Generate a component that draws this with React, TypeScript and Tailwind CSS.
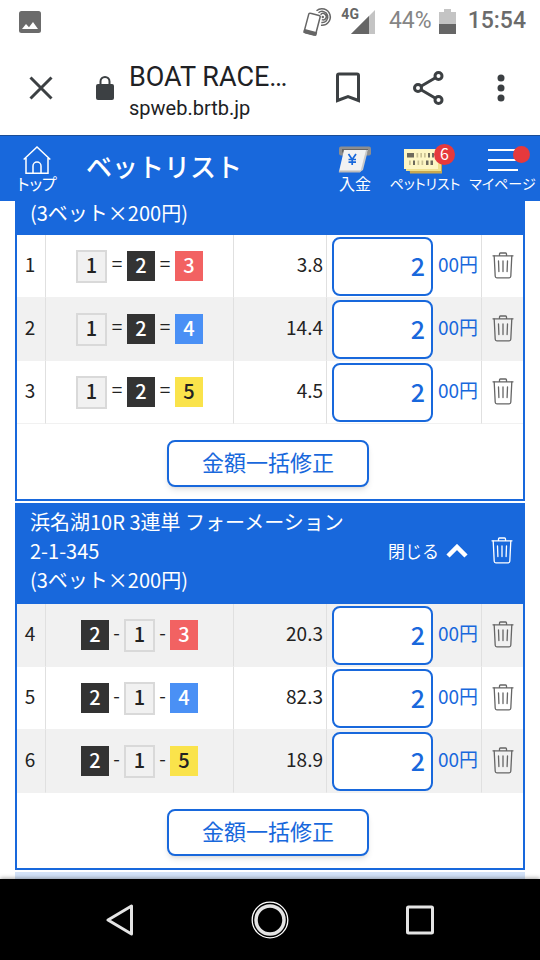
import { useState } from 'react';
import clsx from 'clsx';

type Bet = { no: number; boats: number[]; odds: string };

const quinellaBets: Bet[] = [
  { no: 1, boats: [1, 2, 3], odds: '3.8' },
  { no: 2, boats: [1, 2, 4], odds: '14.4' },
  { no: 3, boats: [1, 2, 5], odds: '4.5' },
];

const formationBets: Bet[] = [
  { no: 4, boats: [2, 1, 3], odds: '20.3' },
  { no: 5, boats: [2, 1, 4], odds: '82.3' },
  { no: 6, boats: [2, 1, 5], odds: '18.9' },
];

const boatStyles: Record<number, string> = {
  1: 'h-[33px] w-[31px] border-2 border-[#d9d9d9] bg-[#f1f1f1] text-[#222]',
  2: 'h-[30px] w-7 bg-[#333] text-white',
  3: 'h-[30px] w-7 bg-[#f26262] text-white',
  4: 'h-[30px] w-7 bg-[#4a90f5] text-white',
  5: 'h-[30px] w-7 bg-[#fae34b] text-[#222]',
};

function TrashIcon() {
  return (
    <svg width="22" height="27" viewBox="0 0 22 27" fill="none" stroke="currentColor" strokeWidth="1.3" strokeLinecap="round" strokeLinejoin="round">
      <path d="M1 3.8h20M7.5 3.5V1.9q0-.9.9-.9h5.2q.9 0 .9.9v1.6" />
      <path d="M2.2 4l1 20.3q.1 1.500 1.600 1.500h12.400q1.500 0 1.600-1.500l1-20.300" />
      <path d="M6.500 9l.4 10.500M11 9v10.500M15.500 9l-.4 10.500" />
    </svg>
  );
}

function StatusBar() {
  return (
    <div className="flex h-[43px] shrink-0 items-center justify-between pr-[14px] pl-[19px] font-[Roboto,sans-serif]">
      <svg width="22" height="22" viewBox="0 0 22 22">
        <rect width="22" height="22" rx="2.500" fill="#6b6b6b" />
        <path d="M3 18l4-5 3 3.200 4-5.200 5 7z" fill="#fff" />
      </svg>
      <div className="flex items-center">
        <svg width="30" height="30" viewBox="0 0 30 30" fill="none" stroke="#666" strokeWidth="1.500">
          <path d="M13.500 3.800a8.300 8.300 0 1 1 4.500 14.500M15.500 5.800a5.600 5.600 0 1 1 2.800 9.700M17.600 7.700a3.200 3.200 0 1 1 1.200 4.900" />
          <circle cx="19.800" cy="10" r="1.200" fill="#666" stroke="none" />
          <path d="M7.500 6.300l8.600 2.200q1.400.4 1 1.800l-4.300 16.500q-.4 1.500-1.800 1.100L2.300 25.700Q.9 25.300 1.300 23.900L5.700 7.400q.4-1.500 1.800-1.100z" fill="#fff" />
          <path d="M1.700 22.800l11.600 3-.7 2.300-11.400-3z" fill="#666" />
        </svg>
        <span className="ml-2 self-start text-[14px] leading-5 font-bold text-[#666]">4G</span>
        <svg className="-ml-2" width="24" height="24" viewBox="0 0 24 24">
          <path d="M24 0v24H0z" fill="#c4c4c4" />
          <path d="M18 6v18H0z" fill="#666" />
        </svg>
        <span className="ml-[14px] text-[23px] text-[#858585]">44%</span>
        <svg className="ml-[7px]" width="17" height="25" viewBox="0 0 17 25">
          <path d="M5 0h7v3h5v22H0V3h5z" fill="#c4c4c4" />
          <path d="M0 15h17v10H0z" fill="#666" />
        </svg>
        <span className="ml-3 text-[23px] font-medium text-[#6b6b6b]">15:54</span>
      </div>
    </div>
  );
}

function BrowserBar() {
  return (
    <div className="flex h-[92px] shrink-0 items-center pr-[35px] pb-[2px] pl-[29px] font-[Roboto,sans-serif] text-[#3c4043]">
      <button aria-label="閉じる">
        <svg width="24" height="24" viewBox="0 0 24 24" fill="none" stroke="currentColor" strokeWidth="3">
          <path d="M1.500 1.500l21 21M22.500 1.500l-21 21" />
        </svg>
      </button>
      <svg className="ml-[42px]" width="20" height="24" viewBox="0 0 20 24">
        <rect x="1" y="8" width="18" height="16" rx="2" fill="currentColor" />
        <path d="M5.500 9V5.500a4.500 4.500 0 0 1 9 0V9" fill="none" stroke="currentColor" strokeWidth="2" />
      </svg>
      <div className="ml-[14px] min-w-0 flex-1 pt-2 text-[#202124]">
        <p className="truncate text-[27px] leading-[32px]">BOAT RACE…</p>
        <p className="text-[20px] leading-[30px]">spweb.brtb.jp</p>
      </div>
      <button aria-label="ブックマーク">
        <svg width="24" height="32" viewBox="0 0 24 32" fill="none" stroke="currentColor" strokeWidth="3">
          <path d="M1.500 28.500v-25q0-1.500 1.500-1.500h18q1.500 0 1.500 1.500v25L12 24.500z" />
        </svg>
      </button>
      <button aria-label="共有" className="ml-[53px]">
        <svg width="31" height="34" viewBox="0 0 31 34" fill="none" stroke="currentColor" strokeWidth="3">
          <circle cx="5" cy="17" r="3.500" />
          <circle cx="25.500" cy="5" r="3.500" />
          <circle cx="25.500" cy="29" r="3.500" />
          <path d="M8 15.200L22.500 6.800M8 18.800l14.500 8.400" />
        </svg>
      </button>
      <button aria-label="メニュー" className="ml-[53px]">
        <svg width="8" height="28" viewBox="0 0 8 28" fill="currentColor">
          <circle cx="4" cy="4" r="3.500" />
          <circle cx="4" cy="14" r="3.500" />
          <circle cx="4" cy="24" r="3.500" />
        </svg>
      </button>
    </div>
  );
}

function SiteHeader() {
  const item = 'flex flex-col items-center leading-4 whitespace-nowrap [font-feature-settings:"palt"]';
  return (
    <header className="relative z-10 flex h-[66px] shrink-0 border-t border-[#1b4d96] bg-[#1868dc] pt-[10px] text-white">
      <a href="#top" className={clsx(item, 'w-[74px] text-[16px]')}>
        <svg className="mb-px" width="28" height="28" viewBox="0 0 28 28" fill="none" stroke="currentColor" strokeWidth="1.500">
          <path d="M.7 13.500L14 1l13.300 12.500M3 12v15.200h22V12" />
          <path d="M10 27v-7a4 4 0 0 1 8 0v7" />
        </svg>
        トップ
      </a>
      <h1 className="flex-1 pl-3 text-[26px] leading-[40px] font-medium whitespace-nowrap">ベットリスト</h1>
      <nav className="flex">
        <a href="#deposit" className={clsx(item, 'w-[60px] text-[16px]')}>
          <svg className="mb-px" width="34" height="28" viewBox="0 0 34 28">
            <rect x="1" y=".5" width="32" height="9" rx="2" fill="#8e8e8e" />
            <rect x="4" y="3" width="26" height="3.500" fill="#666" />
            <path d="M26 4h4l-5 20-3 2z" fill="#c9c9c9" />
            <path d="M6 4h22l-5.500 21.500H1z" fill="#f2f2f2" />
            <path d="M1 24.500h22l-1 2H.8z" fill="#bcbcbc" />
            <path d="M10.500 8l3.700 5.500L18 8M14.200 13.500V19M10.500 13.500h7.500M10.500 16.200h7.500" fill="none" stroke="#1868dc" strokeWidth="1.700" />
          </svg>
          入金
        </a>
        <a href="#bets" className={clsx(item, 'relative w-[80px] text-[14px]')}>
          <svg className="mr-1 mb-px" width="42" height="28" viewBox="0 0 42 28">
            <path d="M6 7h34v20.500H8z" fill="#c9a94e" />
            <path d="M4 5h35v20H4z" fill="#efe08f" />
            <path d="M2 3h34v20H2z" fill="#fdf6c4" />
            <path d="M5 7h7v4.500H5zM26 7h2v4.500h-2zM30 7h2v4.500h-2zM11 14.500h2V19h-2zM24 14.500h2.500V19H24zM28.500 14.500H31V19h-2.500z" fill="#6d6a5c" />
            <path d="M14.500 7h1.700v4.500h-1.700zM18.300 7H20v4.500h-1.700zM22 7h1.700v4.500H22zM7 14.500h1.700V19H7zM15.500 14.500h1.700V19h-1.700zM19.500 14.500h1.700V19h-1.700z" fill="#c9c193" />
          </svg>
          ペットリスト
          <span className="absolute -top-0.5 right-[10px] flex size-[21px] items-center justify-center rounded-full bg-[#e6393c] pb-[3px] text-[16px]">6</span>
        </a>
        <a href="#mypage" className={clsx(item, 'relative w-[75px] text-[14px]')}>
          <svg className="mb-px" width="30" height="28" viewBox="0 0 30 28" stroke="currentColor" strokeWidth="2">
            <path d="M0 4h30M0 14h30M0 24h30" />
          </svg>
          マイページ
          <span className="absolute top-0 right-[10px] size-[17px] rounded-full bg-[#e6393c]" />
        </a>
      </nav>
    </header>
  );
}

function BetTable({ bets, separator, grayFirst }: { bets: Bet[]; separator: '=' | '-'; grayFirst?: boolean }) {
  const [amounts, setAmounts] = useState<string[]>(bets.map(() => '2'));

  return (
    <table className="w-full table-fixed border-separate border-spacing-0 text-[19px] text-[#222]">
      <colgroup>
        <col className="w-[29px]" />
        <col />
        <col className="w-[93px]" />
        <col className="w-[155px]" />
        <col className="w-[41px]" />
      </colgroup>
      <tbody>
        {bets.map((bet, i) => (
          <tr key={bet.no} className={clsx('h-[63px] *:border-b *:border-[#f1f1f1] *:p-0', (i % 2 === 0) === !!grayFirst ? 'bg-[#f1f1f1]' : 'bg-white')}>
            <td className="border-r !border-r-[#e0e0e0] !pr-[2px] !pb-[3px] text-center">{bet.no}</td>
            <td className="border-r !border-r-[#e0e0e0]">
              <div className="flex items-center justify-center">
                {bet.boats.map((boat, n) => (
                  <div key={boat} className="flex items-center">
                    {n > 0 && <span className={clsx('pb-[5px] text-center', separator === '=' ? 'w-5' : 'w-[15px]')}>{separator}</span>}
                    <span className={clsx('flex items-center justify-center pb-[3px] text-[20px] font-medium', boatStyles[boat])}>{boat}</span>
                  </div>
                ))}
              </div>
            </td>
            <td className="border-r !border-r-[#e0e0e0] !pr-[3px] !pb-[3px] text-right">{bet.odds}</td>
            <td className="border-r !border-r-[#e0e0e0]">
              <label className="flex items-center pl-[5px] text-[#1868dc]">
                <input
                  className="h-[59px] w-[101px] rounded-lg border-2 border-[#1868dc] bg-white pr-[6px] pb-[3px] text-right text-[25px] font-medium"
                  inputMode="numeric"
                  aria-label={`${bet.no} 金額`}
                  value={amounts[i]}
                  onChange={(e) => setAmounts(amounts.map((a, n) => (n === i ? e.target.value : a)))}
                />
                <span className="ml-[5px] pb-[3px] whitespace-nowrap">00円</span>
              </label>
            </td>
            <td>
              <button aria-label={`${bet.no} を削除`} className="flex w-full justify-center pb-[2px] text-[#666]">
                <TrashIcon />
              </button>
            </td>
          </tr>
        ))}
      </tbody>
    </table>
  );
}

function BulkEdit() {
  return (
    <div className="flex justify-center pt-4 pr-1 pb-3">
      <button className="h-[47px] w-[202px] rounded-lg border-2 border-[#1868dc] bg-white pb-[5px] text-[22px] leading-[30px] text-[#1868dc] shadow-md">金額一括修正</button>
    </div>
  );
}

export default function App() {
  return (
    <div className="flex h-screen flex-col overflow-hidden bg-white font-['Noto_Sans_CJK_JP',sans-serif]">
      <StatusBar />
      <BrowserBar />
      <SiteHeader />

      <main className="flex min-h-0 flex-1 flex-col px-[15px]">
        <section className="mb-[2px] shrink-0 border-2 border-t-0 border-[#1868dc]">
          <h2 className="bg-[#1868dc] pb-[10px] pl-[13px] text-[20px] leading-6 text-white">(3ベット×200円)</h2>
          <BetTable bets={quinellaBets} separator="=" />
          <BulkEdit />
        </section>

        <section className="mb-[2px] shrink-0 border-2 border-[#1868dc]">
          <div className="flex items-center bg-[#1868dc] pt-[2px] pb-[10px] text-white">
            <h2 className="flex-1 pl-[13px] text-[20px] leading-[29px]">
              浜名湖10R 3連単 フォーメーション
              <br />
              2-1-345
              <br />
              (3ベット×200円)
            </h2>
            <button className="flex items-center gap-[7px] text-[17px]">
              閉じる
              <svg width="22" height="14" viewBox="0 0 22 14" fill="none" stroke="currentColor" strokeWidth="4.500">
                <path d="M2 12l9-9 9 9" />
              </svg>
            </button>
            <button aria-label="すべて削除" className="flex w-[55px] justify-end pr-[10px]">
              <TrashIcon />
            </button>
          </div>
          <BetTable bets={formationBets} separator="-" grayFirst />
          <BulkEdit />
        </section>

        <div className="flex-1 bg-[#d3e2f8]" />
      </main>

      <nav className="relative flex h-[81px] shrink-0 items-center justify-center bg-black shadow-[0_-1px_4px_rgba(0,0,0,0.35)]">
        <button aria-label="戻る" className="flex w-[150px] justify-center">
          <svg width="28" height="34" viewBox="0 0 28 34" fill="none" stroke="#e4e4e4" strokeWidth="3" strokeLinejoin="round">
            <path d="M2 17L25.500 3v28z" />
          </svg>
        </button>
        <button aria-label="ホーム" className="flex w-[150px] justify-center">
          <svg width="38" height="38" viewBox="0 0 38 38" fill="none">
            <circle cx="19" cy="19" r="17.800" stroke="#fff" strokeWidth="1.300" />
            <circle cx="19" cy="19" r="14" stroke="#e4e4e4" strokeWidth="3.500" />
          </svg>
        </button>
        <button aria-label="履歴" className="flex w-[150px] justify-center">
          <svg width="28" height="30" viewBox="0 0 28 30" fill="none" stroke="#e4e4e4" strokeWidth="3">
            <rect x="1.500" y="2" width="25" height="26" rx="1" />
          </svg>
        </button>
      </nav>
    </div>
  );
}
